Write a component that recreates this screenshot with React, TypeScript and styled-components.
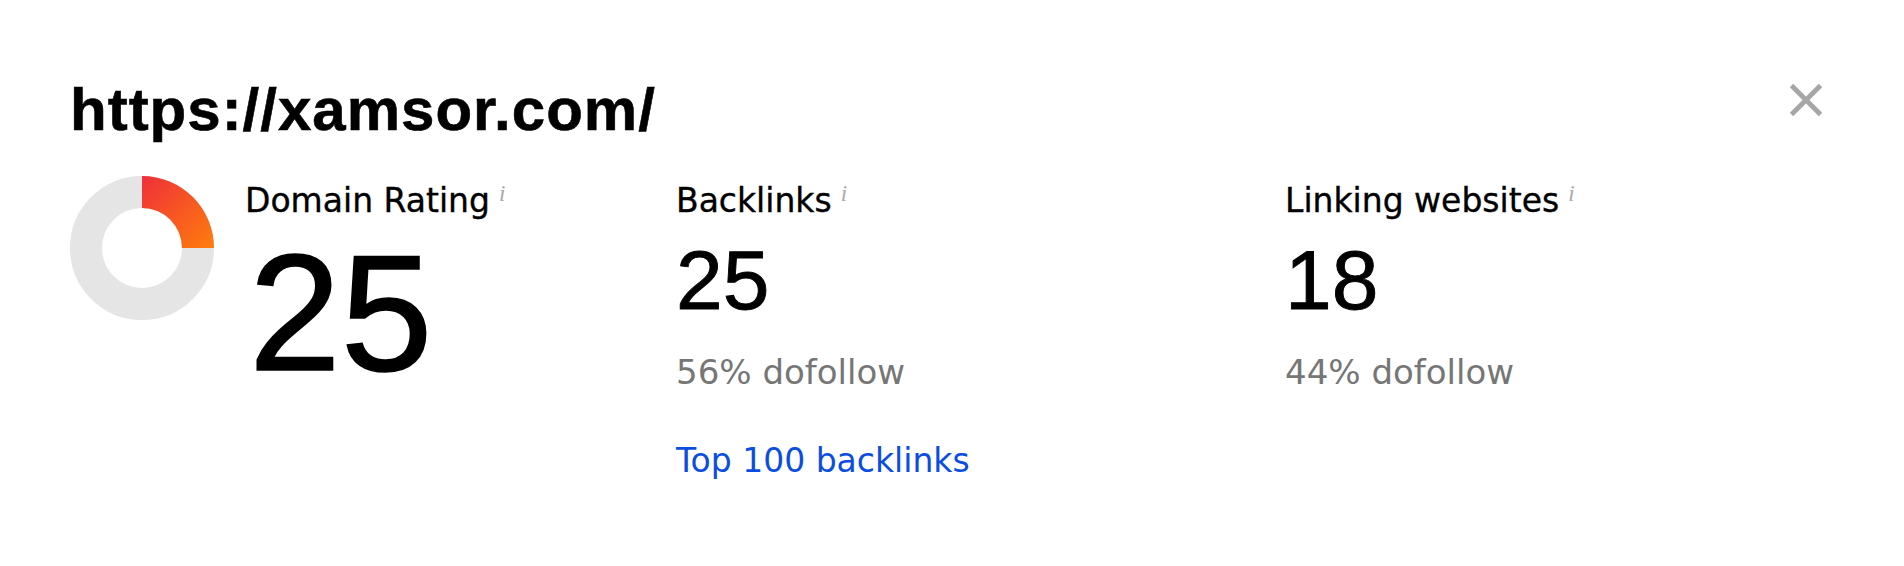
import React from "react";
import styled, { createGlobalStyle } from "styled-components";

const GlobalStyle = createGlobalStyle`
    html, body {
        margin: 0;
        padding: 0;
        background: #ffffff;
    }
`;

const Card = styled.div`
    padding: 80px 78px 0 70px;
    color: #000;
    font-family: "DejaVu Sans", "Liberation Sans", sans-serif;
`;

const Header = styled.div`
    display: flex;
    justify-content: space-between;
    align-items: flex-start;
`;

const Title = styled.h1`
    margin: 0;
    font-family: "Liberation Sans", Arial, sans-serif;
    font-weight: 700;
    font-size: 60px;
    line-height: 60px;
    letter-spacing: 1px;
    -webkit-text-stroke: 0.6px #000;
`;

const CloseButton = styled.button`
    width: 40px;
    height: 40px;
    padding: 0;
    border: none;
    background: transparent;
    cursor: pointer;
    display: flex;
    align-items: center;
    justify-content: center;
`;

const Stats = styled.div`
    margin-top: 36px;
    display: grid;
    grid-template-columns: 606px 609px 1fr;
`;

const RatingCell = styled.div`
    display: flex;
    gap: 31px;
`;

const Stat = styled.div`
    padding-top: 5px;
    display: flex;
    flex-direction: column;
    align-items: flex-start;
`;

const Label = styled.div`
    font-size: 33px;
    line-height: 40px;
    height: 40px;
    white-space: nowrap;
    -webkit-text-stroke: 0.35px #000;
`;

const Info = styled.span`
    display: inline-block;
    vertical-align: top;
    margin: 3px 0 0 9px;
    font-family: "Liberation Serif", serif;
    font-style: italic;
    font-size: 23px;
    line-height: 20px;
    color: #a9a9a9;
    -webkit-text-stroke: 0;
`;

const Value = styled.div<{ $big?: boolean }>`
    font-family: "Liberation Sans", Arial, sans-serif;
    font-size: ${(p) => (p.$big ? "165px" : "84px")};
    line-height: 1;
    margin-top: ${(p) => (p.$big ? "10px" : "17px")};
    margin-left: ${(p) => (p.$big ? "4px" : "0")};
    -webkit-text-stroke: ${(p) => (p.$big ? "1.6px" : "0.9px")} #000;
`;

const Sub = styled.div`
    margin-top: 30px;
    font-size: 34px;
    line-height: 40px;
    color: #767676;
    white-space: nowrap;
`;

const Link = styled.a`
    margin-top: 49px;
    font-size: 33px;
    line-height: 40px;
    color: #0b4de0;
    text-decoration: none;
    white-space: nowrap;
`;

const Donut = ({ value }: { value: number }) => {
    const size = 144;
    const c = size / 2;
    const R = 72;
    const r = 40;
    const a = (value / 100) * Math.PI * 2;
    const ox = c + R * Math.sin(a);
    const oy = c - R * Math.cos(a);
    const ix = c + r * Math.sin(a);
    const iy = c - r * Math.cos(a);
    const large = value > 50 ? 1 : 0;
    const d = `M ${c} ${c - R} A ${R} ${R} 0 ${large} 1 ${ox} ${oy} L ${ix} ${iy} A ${r} ${r} 0 ${large} 0 ${c} ${c - r} Z`;
    return (
        <svg width={size} height={size} viewBox={`0 0 ${size} ${size}`}>
            <defs>
                <linearGradient id="drGrad" x1="0" y1="0" x2="1" y2="1">
                    <stop offset="0%" stopColor="#ef2f3a" />
                    <stop offset="100%" stopColor="#ff7d0c" />
                </linearGradient>
            </defs>
            <circle cx={c} cy={c} r={(R + r) / 2} fill="none" stroke="#e5e5e5" strokeWidth={R - r} />
            <path d={d} fill="url(#drGrad)" />
        </svg>
    );
};

const App = () => {
    return (
        <>
            <GlobalStyle />
            <Card>
                <Header>
                    <Title>https://xamsor.com/</Title>
                    <CloseButton aria-label="Close">
                        <svg width="40" height="40" viewBox="0 0 40 40">
                            <path d="M5.5 5.5 L34.5 34.5 M34.5 5.5 L5.5 34.5" stroke="#a6a6a6" strokeWidth="4.8" fill="none" />
                        </svg>
                    </CloseButton>
                </Header>
                <Stats>
                    <RatingCell>
                        <Donut value={25} />
                        <Stat>
                            <Label>
                                Domain Rating<Info>i</Info>
                            </Label>
                            <Value $big>25</Value>
                        </Stat>
                    </RatingCell>
                    <Stat>
                        <Label>
                            Backlinks<Info>i</Info>
                        </Label>
                        <Value>25</Value>
                        <Sub>56% dofollow</Sub>
                        <Link href="#">Top 100 backlinks</Link>
                    </Stat>
                    <Stat>
                        <Label>
                            Linking websites<Info>i</Info>
                        </Label>
                        <Value>18</Value>
                        <Sub>44% dofollow</Sub>
                    </Stat>
                </Stats>
            </Card>
        </>
    );
};

export default App;
